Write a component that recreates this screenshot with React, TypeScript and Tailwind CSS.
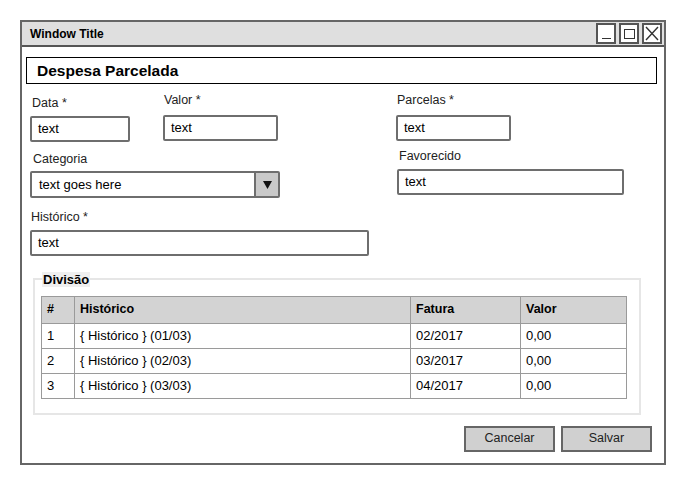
import React from 'react'

const sketch = { fontFamily: '"Liberation Sans", Arial, sans-serif' }

const Field = ({ label, w, className = '', labelClass = '' }: { label: string; w: string; className?: string; labelClass?: string }) => (
  <div className={`flex flex-col ${className}`}>
    <span className={`text-[12.5px] text-[#222] leading-none ${labelClass}`}>{label}</span>
    <div className={`${w} h-[26px] border-2 border-[#6e6e6e] rounded-[2px] bg-white flex items-center px-[6px] text-[13px] text-black`}>
      text
    </div>
  </div>
)

const rows = [
  { n: '1', h: '{ Histórico } (01/03)', f: '02/2017', v: '0,00' },
  { n: '2', h: '{ Histórico } (02/03)', f: '03/2017', v: '0,00' },
  { n: '3', h: '{ Histórico } (03/03)', f: '04/2017', v: '0,00' },
]

const App = () => {
  return (
    <div className="w-[685px] h-[484px] bg-white pt-[20px] pl-[20px]" style={sketch}>
      <div className="w-[646px] h-[445px] border-2 border-[#666] flex flex-col bg-white">
        {/* title bar */}
        <div className="h-[25px] bg-[#dfdfdf] border-b-2 border-[#555] flex items-center justify-between pl-[8px] pr-[2px]">
          <span className="text-[12px] font-bold text-black">Window Title</span>
          <div className="flex gap-[3px]">
            <div className="w-[20px] h-[21px] border-2 border-[#555] bg-white flex items-end justify-center pb-[3px]">
              <div className="w-[9px] h-[1.5px] bg-[#333]" />
            </div>
            <div className="w-[20px] h-[21px] border-2 border-[#555] bg-white flex items-center justify-center">
              <div className="w-[11px] h-[10px] border-[1.5px] border-[#333]" />
            </div>
            <div className="w-[20px] h-[21px] border-2 border-[#555] bg-white flex items-center justify-center">
              <svg width="14" height="15" viewBox="0 0 14 15">
                <path d="M1 1 L13 14 M13 1 L1 14" stroke="#333" strokeWidth="1.4" fill="none" />
              </svg>
            </div>
          </div>
        </div>

        {/* header */}
        <div className="ml-[4px] mt-[10px] w-[631px] h-[27px] border-[1.5px] border-black flex items-center pl-[10px]">
          <span className="text-[15.5px] font-bold text-black">Despesa Parcelada</span>
        </div>

        {/* row 1 */}
        <div className="flex mt-[10px] ml-[8px]">
          <Field label="Data *" w="w-[100px]" className="w-[133px] pt-[3px]" labelClass="ml-[2px] mb-[6px]" />
          <Field label="Valor *" w="w-[115px]" className="w-[233px]" labelClass="ml-[1px] mb-[8px]" />
          <Field label="Parcelas *" w="w-[115px]" labelClass="ml-[1px] mb-[8px]" />
        </div>

        {/* row 2 */}
        <div className="flex mt-[8px] ml-[8px]">
          <div className="flex flex-col w-[367px] pt-[3px]">
            <span className="text-[12.5px] text-[#222] leading-none ml-[3px] mb-[6px]">Categoria</span>
            <div className="w-[250px] h-[27px] border-2 border-[#6e6e6e] rounded-[2px] flex">
              <div className="flex-1 flex items-center px-[7px] text-[13px] text-black">text goes here</div>
              <div className="w-[24px] bg-[#c9c9c9] border-l-2 border-[#6e6e6e] flex items-center justify-center">
                <svg width="9" height="8" viewBox="0 0 9 8">
                  <path d="M0 0 H9 L4.5 8 Z" fill="#111" />
                </svg>
              </div>
            </div>
          </div>
          <Field label="Favorecido" w="w-[227px]" labelClass="ml-[2px] mb-[7px]" />
        </div>

        {/* row 3 */}
        <div className="flex mt-[13px] ml-[8px]">
          <Field label="Histórico *" w="w-[339px]" labelClass="ml-[1px] mb-[6px]" />
        </div>

        {/* division */}
        <fieldset className="ml-[11px] mt-[16px] w-[608px] h-[143px] border-2 border-[#e6e6e6] px-[6px] pb-[14px]">
          <legend className="ml-[1px] px-[1px] bg-[#efefef] text-[13px] font-bold text-black leading-[15px]">Divisão</legend>
          <table className="mt-[9px] w-[586px] border-collapse text-[13px] text-black">
            <thead>
              <tr className="bg-[#d3d3d3] h-[27px] font-bold text-left text-[12.5px]">
                <th className="border border-[#9a9a9a] w-[33px] pl-[5px]">#</th>
                <th className="border border-[#9a9a9a] w-[336px] pl-[5px]">Histórico</th>
                <th className="border border-[#9a9a9a] w-[110px] pl-[5px]">Fatura</th>
                <th className="border border-[#9a9a9a] pl-[5px]">Valor</th>
              </tr>
            </thead>
            <tbody>
              {rows.map((r) => (
                <tr key={r.n} className="h-[25px]">
                  <td className="border border-[#9a9a9a] pl-[5px]">{r.n}</td>
                  <td className="border border-[#9a9a9a] pl-[5px]">{r.h}</td>
                  <td className="border border-[#9a9a9a] pl-[5px]">{r.f}</td>
                  <td className="border border-[#9a9a9a] pl-[5px]">{r.v}</td>
                </tr>
              ))}
            </tbody>
          </table>
        </fieldset>

        {/* buttons */}
        <div className="flex justify-end gap-[6px] mt-[11px] pr-[12px]">
          <button className="w-[91px] h-[26px] bg-[#d0d0d0] border-2 border-[#666] text-[12.5px] text-[#222]">Cancelar</button>
          <button className="w-[91px] h-[26px] bg-[#d0d0d0] border-2 border-[#666] text-[12.5px] text-[#222]">Salvar</button>
        </div>
      </div>
    </div>
  )
}

export default App
